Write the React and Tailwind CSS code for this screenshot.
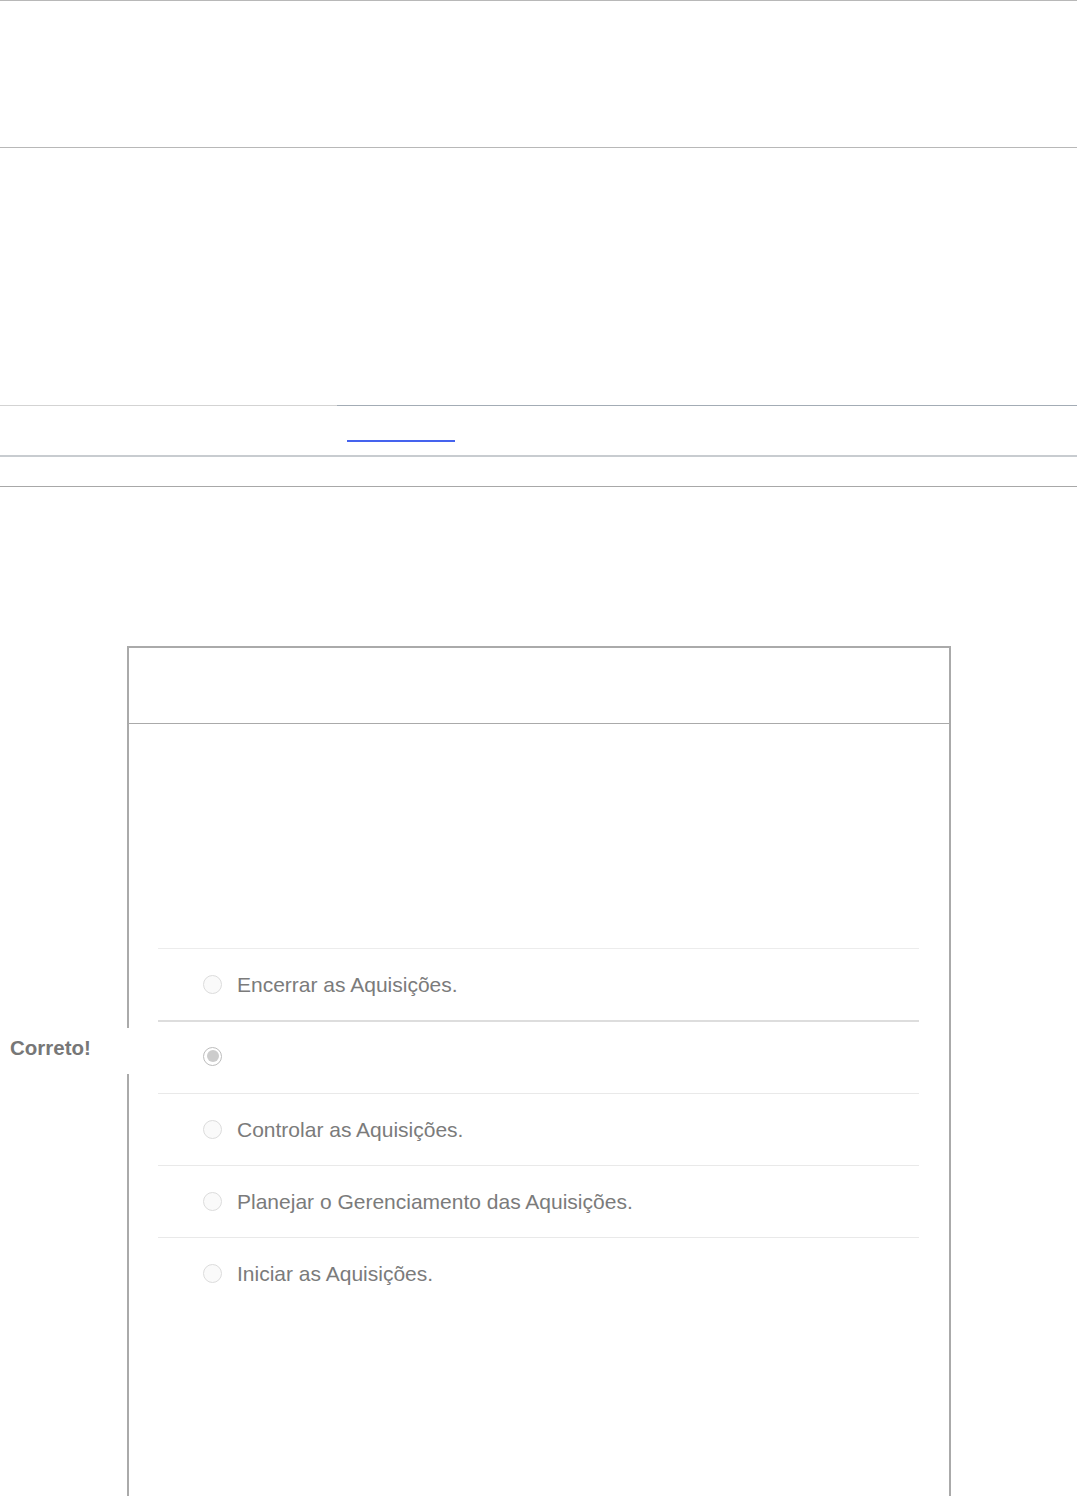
import React from 'react';

const answers = [
    { text: 'Encerrar as Aquisições.' },
    { text: '', selected: true, correct: true },
    { text: 'Controlar as Aquisições.' },
    { text: 'Planejar o Gerenciamento das Aquisições.' },
    { text: 'Iniciar as Aquisições.' },
];

const Radio = ({ selected }) => (
    <span
        className={
            selected
                ? 'flex items-center justify-center w-[19px] h-[19px] rounded-full border border-[#bdbdbd] bg-white'
                : 'block w-[19px] h-[19px] rounded-full border border-[#dcdcdc] bg-[#fafafa]'
        }
    >
        {selected && <span className="block w-[12px] h-[12px] rounded-full bg-[#cccccc]" />}
    </span>
);

const AnswerRow = ({ answer, index }) => {
    const rowClass =
        index === 1
            ? 'relative flex items-center h-[73px] pb-[3px] border-t-2 border-[#dddddd] pl-[45px]'
            : index === 0
            ? 'relative flex items-center h-[72px] border-t border-[#ececec] pl-[45px]'
            : 'relative flex items-center h-[72px] border-t border-[#e9e9e9] pl-[45px]';

    return (
        <div className={rowClass}>
            {answer.correct && (
                <div className="absolute left-[-158px] top-[6px] w-[150px] h-[46px] bg-white pl-[10px] pt-[8px]">
                    <span className="block text-[20.5px] leading-[24px] font-bold text-[#777777]">Correto!</span>
                </div>
            )}
            <Radio selected={answer.selected} />
            <span className="ml-[15px] text-[21px] leading-[24px] text-[#7b7b7b]">{answer.text}</span>
        </div>
    );
};

export default function App() {
    return (
        <div className="w-[1077px] min-h-[1496px] overflow-hidden bg-white font-['Liberation_Sans',Arial,sans-serif]">
            {/* top header strip */}
            <div className="h-[148px] border-t border-b border-[#b8b8b8]" />
            <div className="h-[257px]" />

            {/* tabs row */}
            <div className="flex h-px">
                <div className="w-[337px] bg-[#d3d3d3]" />
                <div className="flex-1 bg-[#a3acb5]" />
            </div>
            <div className="h-[49px] pl-[347px] pt-[34px]">
                <span className="block w-[108px] h-[2px] bg-[#4563ee]" />
            </div>
            <div className="h-[2px] bg-[#c8ccd0]" />
            <div className="h-[29px]" />
            <div className="h-px bg-[#a8a8a8]" />
            <div className="h-[159px]" />

            {/* question box */}
            <div className="ml-[127px] w-[824px] border-2 border-b-0 border-[#aaaaaa] bg-white">
                <div className="h-[76px] border-b border-[#aaaaaa]" />
                <div className="pl-[29px] pr-[30px]">
                    <div className="h-[224px]" />
                    {answers.map((answer, i) => (
                        <AnswerRow key={i} answer={answer} index={i} />
                    ))}
                    <div className="h-[260px]" />
                </div>
            </div>
        </div>
    );
}
